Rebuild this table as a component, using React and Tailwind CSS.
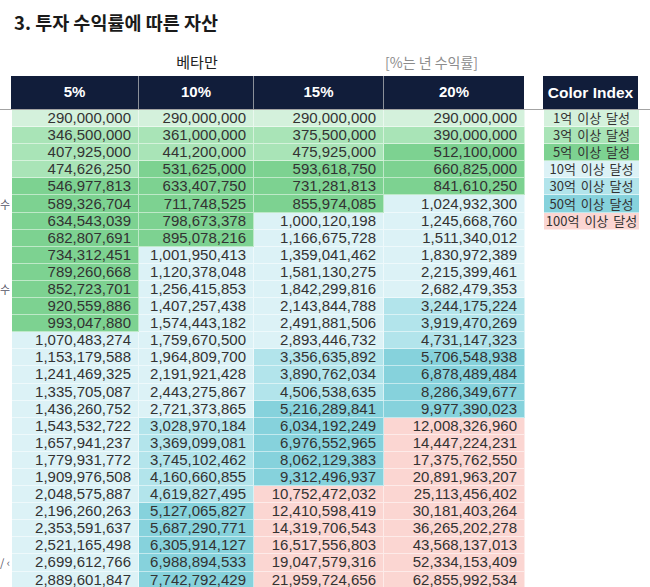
import React from 'react';

const rows = [
  ['290,000,000', '290,000,000', '290,000,000', '290,000,000'],
  ['346,500,000', '361,000,000', '375,500,000', '390,000,000'],
  ['407,925,000', '441,200,000', '475,925,000', '512,100,000'],
  ['474,626,250', '531,625,000', '593,618,750', '660,825,000'],
  ['546,977,813', '633,407,750', '731,281,813', '841,610,250'],
  ['589,326,704', '711,748,525', '855,974,085', '1,024,932,300'],
  ['634,543,039', '798,673,378', '1,000,120,198', '1,245,668,760'],
  ['682,807,691', '895,078,216', '1,166,675,728', '1,511,340,012'],
  ['734,312,451', '1,001,950,413', '1,359,041,462', '1,830,972,389'],
  ['789,260,668', '1,120,378,048', '1,581,130,275', '2,215,399,461'],
  ['852,723,701', '1,256,415,853', '1,842,299,816', '2,682,479,353'],
  ['920,559,886', '1,407,257,438', '2,143,844,788', '3,244,175,224'],
  ['993,047,880', '1,574,443,182', '2,491,881,506', '3,919,470,269'],
  ['1,070,483,274', '1,759,670,500', '2,893,446,732', '4,731,147,323'],
  ['1,153,179,588', '1,964,809,700', '3,356,635,892', '5,706,548,938'],
  ['1,241,469,325', '2,191,921,428', '3,890,762,034', '6,878,489,484'],
  ['1,335,705,087', '2,443,275,867', '4,506,538,635', '8,286,349,677'],
  ['1,436,260,752', '2,721,373,865', '5,216,289,841', '9,977,390,023'],
  ['1,543,532,722', '3,028,970,184', '6,034,192,249', '12,008,326,960'],
  ['1,657,941,237', '3,369,099,081', '6,976,552,965', '14,447,224,231'],
  ['1,779,931,772', '3,745,102,462', '8,062,129,383', '17,375,762,550'],
  ['1,909,976,508', '4,160,660,855', '9,312,496,937', '20,891,963,207'],
  ['2,048,575,887', '4,619,827,495', '10,752,472,032', '25,113,456,402'],
  ['2,196,260,263', '5,127,065,827', '12,410,598,419', '30,181,403,264'],
  ['2,353,591,637', '5,687,290,771', '14,319,706,543', '36,265,202,278'],
  ['2,521,165,498', '6,305,914,127', '16,517,556,803', '43,568,137,013'],
  ['2,699,612,766', '6,988,894,533', '19,047,579,316', '52,334,153,409'],
  ['2,889,601,847', '7,742,792,429', '21,959,724,656', '62,855,992,534'],
];

const headers = ['5%', '10%', '15%', '20%'];
const widths = ['w-[127px]', 'w-[115px]', 'w-[130px]', 'w-[141px]'];

const legend = [
  ['1억 이상 달성', 'bg-[#d4f1dc]'],
  ['3억 이상 달성', 'bg-[#a9e4b7]'],
  ['5억 이상 달성', 'bg-[#7dd291]'],
  ['10억 이상 달성', 'bg-[#dcf2f6]'],
  ['30억 이상 달성', 'bg-[#b2e4eb]'],
  ['50억 이상 달성', 'bg-[#86d2dc]'],
  ['100억 이상 달성', 'bg-[#fbd6d2]'],
];

// left-edge leftovers of the hidden column
const gutter = { 5: '수', 10: '수', 26: '/ ‹' };

function cellColor(text) {
  const v = Number(text.replace(/,/g, ''));
  if (v >= 1e10) return 'bg-[#fbd6d2]';
  if (v >= 5e9) return 'bg-[#86d2dc]';
  if (v >= 3e9) return 'bg-[#b2e4eb]';
  if (v >= 1e9) return 'bg-[#dcf2f6]';
  if (v >= 5e8) return 'bg-[#7dd291]';
  if (v >= 3e8) return 'bg-[#a9e4b7]';
  return 'bg-[#d4f1dc]';
}

export default function App() {
  return (
    <div className="w-[650px] h-[587px] overflow-hidden bg-white text-[#333] font-['Liberation_Sans','Noto_Sans_CJK_KR',sans-serif]">
      <div className="pl-[14px] pt-[10px] h-[34px] text-[18.5px] leading-[24px] font-bold text-[#1a1a1a] font-['Noto_Sans_CJK_KR',sans-serif]">
        3. 투자 수익률에 따른 자산
      </div>

      <div className="mt-[18px] flex h-[20px] items-center font-['Noto_Sans_CJK_KR',sans-serif]">
        <div className="ml-[11px] w-[372px] text-center text-[15px] text-[#222]">베타만</div>
        <div className="pl-[2px] text-[14px] text-[#8c8c8c]">[%는 년 수익률]</div>
      </div>

      <div className="mt-[4px] flex border-b border-[#a3a3a3]">
        <div className="w-[11px]" />
        <div className="flex h-[33px] bg-[#111d3a] text-white text-[15px] font-bold">
          {headers.map((h, i) => (
            <div
              key={h}
              className={`${widths[i]} flex items-center justify-center ${i > 0 ? 'border-l border-[#8a8f99]' : ''}`}
            >
              {h}
            </div>
          ))}
        </div>
        <div className="w-[19px]" />
        <div className="w-[95px] h-[33px] flex items-center justify-center bg-[#111d3a] text-white text-[15.5px] font-bold">
          Color Index
        </div>
      </div>

      <div className="flex">
        <div className="w-[11px] flex flex-col overflow-hidden">
          {rows.map((_, i) => (
            <div
              key={i}
              className="h-[17.1px] flex items-center justify-end whitespace-nowrap pr-[1px] text-[11px] leading-[17px] text-[#556] font-['Noto_Sans_CJK_KR',sans-serif]"
            >
              {gutter[i] || ''}
            </div>
          ))}
        </div>

        <div className="flex flex-col border-l border-white/50">
          {rows.map((r, i) => (
            <div key={i} className="flex">
              {r.map((v, j) => (
                <div
                  key={j}
                  className={`${widths[j]} ${cellColor(v)} h-[17.1px] flex items-center justify-end pr-[7px] border-r border-b border-white/50 text-[15px] leading-[16px]`}
                >
                  {v}
                </div>
              ))}
            </div>
          ))}
        </div>

        <div className="w-[19px]" />

        <div className="w-[95px] flex flex-col font-['Noto_Sans_CJK_KR',sans-serif]">
          {legend.map(([label, bg]) => (
            <div
              key={label}
              className={`${bg} h-[17.1px] flex items-center justify-center whitespace-nowrap border-b border-white/50 text-[13px] leading-[16px] [word-spacing:2px]`}
            >
              {label}
            </div>
          ))}
        </div>
      </div>
    </div>
  );
}
